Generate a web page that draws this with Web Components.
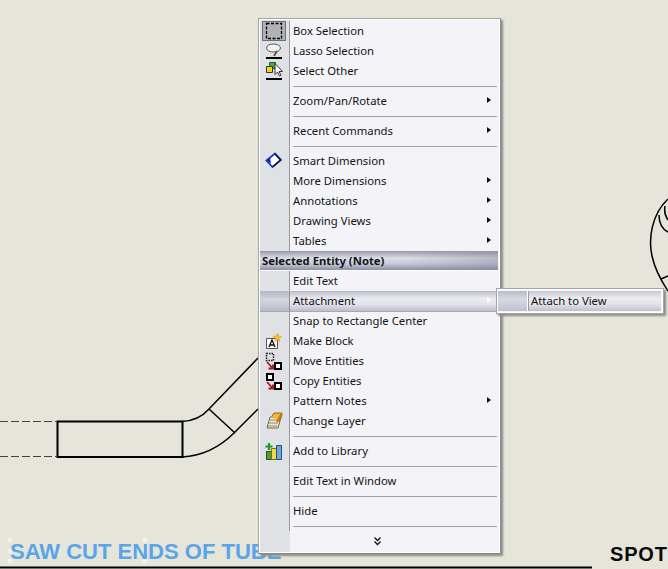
<!DOCTYPE html>
<html>
<head>
<meta charset="utf-8">
<title>Context menu</title>
<style>
    html, body { margin: 0; padding: 0; height: 100%; overflow: hidden; background: #e5e5da; }
</style>
</head>
<body>
<cad-sheet>
    <context-menu>
        <menu-item label="Box Selection" selected>
            <svg slot="icon" width="22" height="20" viewBox="0 0 22 20"><path d="M3.500 2.500h15v15h-15z" fill="none" stroke="#000" stroke-width="1.300" stroke-dasharray="3 1.500"/></svg>
        </menu-item>
        <menu-item label="Lasso Selection">
            <svg slot="icon" width="22" height="20" viewBox="0 0 22 20"><ellipse cx="10.500" cy="7" rx="7" ry="4" fill="#f3f3f3" stroke="#555"/><path d="M14 10l-3 5" stroke="#444" stroke-width="1.500" fill="none"/><path d="M3 17h16" stroke="#000" stroke-width="2"/></svg>
        </menu-item>
        <menu-item label="Select Other">
            <svg slot="icon" width="22" height="20" viewBox="0 0 22 20"><path d="M6.500 1.500h6v6h-6z" fill="#3fae49" stroke="#1c6b25"/><path d="M3.500 5.500h6v6h-6z" fill="#f7d417" stroke="#333"/><path d="M12 2.500v11l2.500-2.500 2 4 1.500-.8-2-3.700h3.500z" fill="#fff" stroke="#222" stroke-width=".9"/><path d="M3 18h16" stroke="#000" stroke-width="2"/></svg>
        </menu-item>
        <menu-sep></menu-sep>
        <menu-item label="Zoom/Pan/Rotate" arrow></menu-item>
        <menu-sep></menu-sep>
        <menu-item label="Recent Commands" arrow></menu-item>
        <menu-sep></menu-sep>
        <menu-item label="Smart Dimension">
            <svg slot="icon" width="22" height="20" viewBox="0 0 22 20"><path d="M3.500 9.500L12 2.500L18 9L9.500 16z" fill="#fff" stroke="#1b3cc4" stroke-width="1.800"/><path d="M12 3L17.500 9L10 15.500" fill="none" stroke="#141428" stroke-width="1.300"/><path d="M3 9.500L7 6.500L8 12.500z" fill="#0f2cb0"/></svg>
        </menu-item>
        <menu-item label="More Dimensions" arrow></menu-item>
        <menu-item label="Annotations" arrow></menu-item>
        <menu-item label="Drawing Views" arrow></menu-item>
        <menu-item label="Tables" arrow></menu-item>
        <menu-header>Selected Entity (Note)</menu-header>
        <menu-item label="Edit Text"></menu-item>
        <menu-item label="Attachment" arrow active>
            <sub-menu slot="sub"><menu-item label="Attach to View" hot></menu-item></sub-menu>
        </menu-item>
        <menu-item label="Snap to Rectangle Center"></menu-item>
        <menu-item label="Make Block">
            <svg slot="icon" width="22" height="20" viewBox="0 0 22 20"><path d="M3.500 7.500h11v10h-11z" fill="#fff" stroke="#555"/><path d="M6 16l3-7 3 7M7.200 14h3.600" fill="none" stroke="#111" stroke-width="1.300"/><path d="M14.500 2l1 3 3 .5-2.500 2 .8 3-2.500-1.700-2.500 1.700.8-3-2.500-2 3-.5z" fill="#f6c21c" stroke="#e8862a" stroke-width=".5"/></svg>
        </menu-item>
        <menu-item label="Move Entities">
            <svg slot="icon" width="22" height="20" viewBox="0 0 22 20"><path d="M3.500 2.500h7v7h-7z" fill="none" stroke="#222" stroke-width="1.500" stroke-dasharray="1.500 1"/><path d="M12 12h6v6h-6z" fill="#fff" stroke="#000" stroke-width="2"/><path d="M4 11l5.500 6M5.500 17.500h4.500v-4" fill="none" stroke="#a81818" stroke-width="1.800"/></svg>
        </menu-item>
        <menu-item label="Copy Entities">
            <svg slot="icon" width="22" height="20" viewBox="0 0 22 20"><path d="M4 3h6v6h-6z" fill="#fff" stroke="#000" stroke-width="2"/><path d="M12 12h6v6h-6z" fill="#fff" stroke="#000" stroke-width="2"/><path d="M4 11l5.500 6M5.500 17.500h4.500v-4" fill="none" stroke="#a81818" stroke-width="1.800"/></svg>
        </menu-item>
        <menu-item label="Pattern Notes" arrow></menu-item>
        <menu-item label="Change Layer">
            <svg slot="icon" width="22" height="20" viewBox="0 0 22 20"><path d="M7 6h11l-3 11H4z" fill="#efe9c8" stroke="#6d6a50"/><path d="M7 9h9M6 12h9M5 15h9" stroke="#8b8a78"/><path d="M9 5l2-3h7l1 2-3 7" fill="#f0b73a" stroke="#8a6a20"/><path d="M19 2l-5 9" stroke="#c8751c" stroke-width="2"/></svg>
        </menu-item>
        <menu-sep></menu-sep>
        <menu-item label="Add to Library">
            <svg slot="icon" width="22" height="20" viewBox="0 0 22 20"><path d="M3.500 10.500h5v8h-5z" fill="#4f9e34" stroke="#1f5c1a"/><path d="M8.500 7.500h5v11h-5z" fill="#f2d84a" stroke="#7b6b17"/><path d="M13.500 4.500h5v14h-5z" fill="#6ea8dc" stroke="#24517c"/><path d="M6 2v7M2.500 5.500h7" stroke="#1f9a2a" stroke-width="2.200"/></svg>
        </menu-item>
        <menu-sep></menu-sep>
        <menu-item label="Edit Text in Window"></menu-item>
        <menu-sep></menu-sep>
        <menu-item label="Hide"></menu-item>
        <menu-sep last></menu-sep>
        <menu-more></menu-more>
    </context-menu>
</cad-sheet>

<script>
class CadSheet extends HTMLElement {
    constructor() {
        super();
        this.attachShadow({ mode: 'open' });
    }

    connectedCallback() {
        this.shadowRoot.innerHTML = `
            <style>
                :host { display: block; position: relative; width: 668px; height: 569px; overflow: hidden; background: #e5e5da; }
                svg { position: absolute; left: 0; top: 0; }
                .note { position: absolute; left: 10px; top: 540px; font: bold 22px/24px "Liberation Sans", Arial, sans-serif; color: #5aa5ea; white-space: nowrap; }
                .spot { position: absolute; left: 610px; top: 543px; font: bold 20px/22px "Liberation Sans", Arial, sans-serif; color: #0a0a0a; white-space: nowrap; letter-spacing: .8px; }
            </style>
            <svg width="668" height="569" viewBox="0 0 668 569">
                <g fill="none" stroke="#000">
                    <path d="M57.500 421.500H182.500V457H57.500z" stroke-width="2"/>
                    <path d="M0 421.500H57M0 456.500H57" stroke="#444" stroke-dasharray="8 3"/>
                    <path d="M182 421.500C192 421 202 417 209 409L258 358" stroke-width="1.500"/>
                    <path d="M182 457C200 456 218 449 234 433L258 409" stroke-width="1.500"/>
                    <path d="M209 409L235 433" stroke-width="1.500"/>
                    <path d="M668 199C652 214 648 238 652 256C655 270 662 282 668 291" stroke-width="1.500"/>
                    <path d="M659 215C659 222 662 229 668 232M665 206C664 212 665 216 668 220M661 279L668 276" stroke-width="1.500"/>
                    <path d="M0 567.500H592" stroke-width="2"/>
                </g>
                <g fill="#f1f1ee">
                    <circle cx="10" cy="540" r="2.500"/><circle cx="10" cy="551" r="2.500"/><circle cx="10" cy="561" r="2.500"/>
                    <circle cx="145" cy="540" r="2.500"/><circle cx="145" cy="551" r="2.500"/><circle cx="145" cy="561" r="2.500"/>
                </g>
            </svg>
            <div class="note">SAW CUT ENDS OF TUBE</div>
            <div class="spot">SPOT</div>
            <slot></slot>
        `;
    }
}

class ContextMenu extends HTMLElement {
    constructor() {
        super();
        this.attachShadow({ mode: 'open' });
    }

    connectedCallback() {
        this.shadowRoot.innerHTML = `
            <style>
                :host {
                    display: flex; flex-direction: column; box-sizing: border-box;
                    position: absolute; left: 258px; top: 18px; width: 243px; height: 536px;
                    padding: 2px 2px 2px 1px;
                    background: linear-gradient(90deg, #dfe1e5 0 31px, #f3f3f8 31px);
                    border: 1px solid #a5a5a5; border-right-color: #8e8e8e; border-bottom-color: #8a8a8a;
                    box-shadow: 2px 2px 2px #8c8c86, inset 0 0 0 1px #fff;
                    font: 11.300px/20px "Noto Sans", Tahoma, sans-serif; color: #141414;
                }
            </style>
            <slot></slot>
        `;
    }
}

class MenuItem extends HTMLElement {
    constructor() {
        super();
        this.attachShadow({ mode: 'open' });
    }

    connectedCallback() {
        const arrow = this.hasAttribute('arrow');
        this.shadowRoot.innerHTML = `
            <style>
                :host { display: flex; position: relative; height: 20px; align-items: stretch; white-space: nowrap; }
                .icon { width: 30px; flex: none; box-sizing: border-box; border-right: 1px solid #9b9b9b; display: flex; align-items: center; margin-right: 3px; padding-left: 3px; }
                .label { flex: 1; }
                .arrow { width: 0; height: 0; margin: 6px 7px 0 0; border-left: 4px solid #111; border-top: 3.500px solid transparent; border-bottom: 3.500px solid transparent; }
                :host([selected]) .icon { position: relative; }
                :host([selected]) .icon::before { content: ""; position: absolute; left: 2px; top: 0; width: 22px; height: 18px; background: #b0b2b8; border: 1px solid #6e6e73; }
                :host([selected]) ::slotted(svg) { position: relative; }
                :host([active]) { box-sizing: border-box; height: 21px; margin-bottom: -1px; background: linear-gradient(180deg, #c3c5d1 0, #ebebf1 35%, #e2e2ea 65%, #bcbdcb 100%); border-top: 1px solid #b9b9c0; border-bottom: 1px solid #a9a9b0; line-height: 18px; }
                :host([active]) .icon { border-right-color: #8f8f94; background: linear-gradient(180deg, #b5b7c6, #d6d7e0 40%, #b8bac8); }
                :host([active]) .arrow { border-left-color: #fff; margin-top: 5px; }
                :host([hot]) { height: 20px; background: linear-gradient(180deg, #c6c7d4 0, #ebebf1 35%, #e3e3ec 65%, #c0c1cf 100%); }
                :host([hot]) .icon { background: linear-gradient(180deg, #b9bbca, #d8d9e2 40%, #bfc1ce); border-right: 1px solid #fff; box-shadow: 1px 0 0 #9c9ca3; }
            </style>
            <div class="icon"><slot name="icon"></slot></div>
            <div class="label">${this.getAttribute('label')}</div>
            ${arrow ? '<div class="arrow"></div>' : ''}
            <slot name="sub"></slot>
        `;
    }
}

class MenuSep extends HTMLElement {
    constructor() {
        super();
        this.attachShadow({ mode: 'open' });
    }

    connectedCallback() {
        this.shadowRoot.innerHTML = `
            <style>
                :host { display: flex; height: 10px; }
                .gutter { width: 30px; flex: none; box-sizing: border-box; border-right: 1px solid #9b9b9b; }
                .line { flex: 1; height: 1px; margin: 5px 1px 0 3px; background: #a2a2a2; }
            </style>
            <div class="gutter"></div>
            <div class="line"></div>
        `;
    }
}

class MenuHeader extends HTMLElement {
    constructor() {
        super();
        this.attachShadow({ mode: 'open' });
    }

    connectedCallback() {
        this.shadowRoot.innerHTML = `
            <style>
                :host {
                    display: block; box-sizing: border-box; height: 20px; padding-left: 2px;
                    font-weight: bold; line-height: 18px; color: #15151a;
                    border-top: 1px solid #9a9aa0; border-bottom: 1px solid #fff;
                    background: linear-gradient(90deg, transparent 60%, rgba(120,122,145,.35) 100%),
                                linear-gradient(180deg, #a3a5b5 0, #dcdde5 35%, #c8c9d6 65%, #8e90a4 100%);
                }
            </style>
            <slot></slot>
        `;
    }
}

class MenuMore extends HTMLElement {
    constructor() {
        super();
        this.attachShadow({ mode: 'open' });
    }

    connectedCallback() {
        this.shadowRoot.innerHTML = `
            <style>
                :host { display: flex; height: 20px; }
                .gutter { width: 30px; flex: none; }
                .chev { flex: 1; display: flex; justify-content: center; align-items: center; padding-right: 33px; }
            </style>
            <div class="gutter"></div>
            <div class="chev">
                <svg width="7" height="9" viewBox="0 0 7 9"><path d="M.5 .5L3.500 3.500L6.500 .5M.5 4.500L3.500 7.500L6.500 4.500" fill="none" stroke="#111" stroke-width="1.300"/></svg>
            </div>
        `;
    }
}

class SubMenu extends HTMLElement {
    constructor() {
        super();
        this.attachShadow({ mode: 'open' });
    }

    connectedCallback() {
        this.shadowRoot.innerHTML = `
            <style>
                :host {
                    display: block; position: absolute; left: 236px; top: -4px; width: 168px; box-sizing: border-box;
                    padding: 2px 2px 2px 1px; background: #f6f6fa; border: 1px solid #a5a5a5;
                    box-shadow: 2px 2px 2px #8c8c86, inset 0 0 0 1px #fff; color: #141414; line-height: 20px;
                }
            </style>
            <slot></slot>
        `;
    }
}

customElements.define('cad-sheet', CadSheet);
customElements.define('context-menu', ContextMenu);
customElements.define('menu-item', MenuItem);
customElements.define('menu-sep', MenuSep);
customElements.define('menu-header', MenuHeader);
customElements.define('menu-more', MenuMore);
customElements.define('sub-menu', SubMenu);
</script>
</body>
</html>
